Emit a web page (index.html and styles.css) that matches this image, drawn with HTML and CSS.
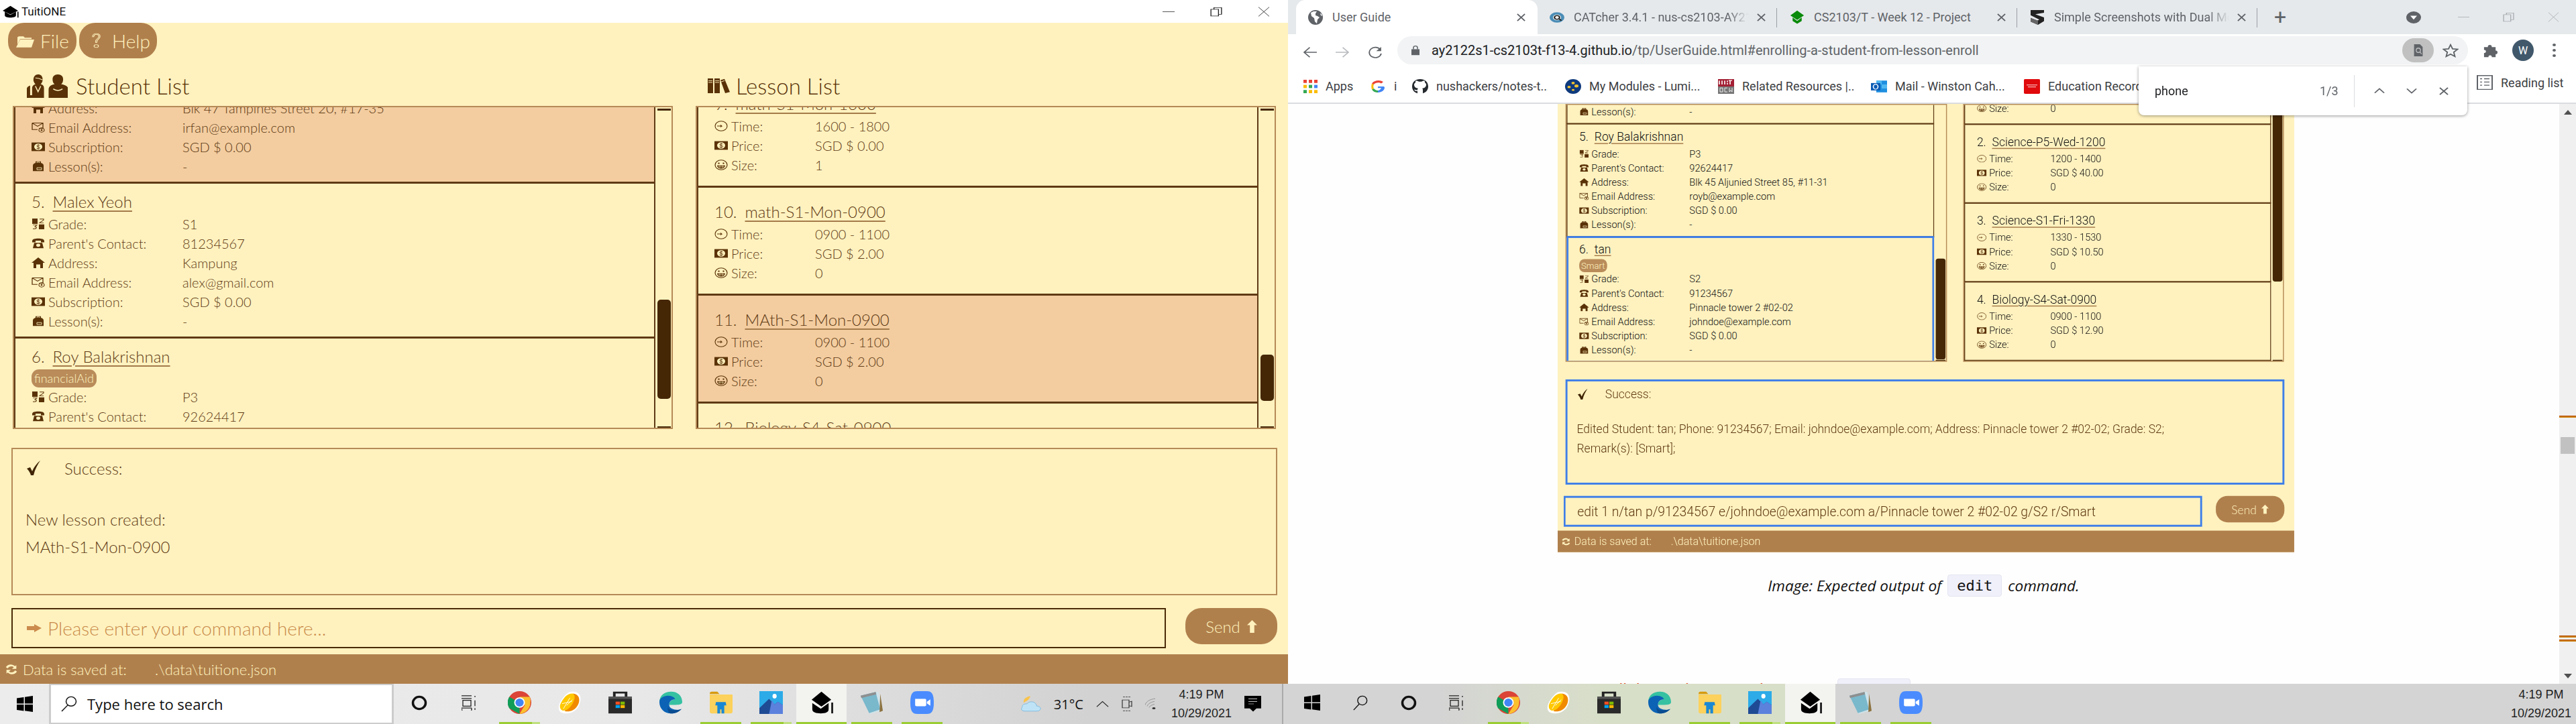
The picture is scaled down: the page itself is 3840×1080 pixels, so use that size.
FILE: index.html
```html
<!DOCTYPE html>
<html lang="en">
<head>
<meta charset="utf-8">
<title>TuitiONE and User Guide</title>
<link rel="stylesheet" href="styles.css">
</head>
<body>
<svg class="defs" width="0" height="0" aria-hidden="true">
  <symbol id="i-logo" preserveAspectRatio="none" viewBox="0 0 24 24"><path d="M12 1 23 10 12 17 1 10Z" fill="#000"/><path d="M4 12v7c0 3 4 4 8 4s8-1 8-4v-7l-8 6Z" fill="#000"/><path d="M22 12h1.600v11h-1.600z" fill="#000"/></symbol>
  <symbol id="i-folder" preserveAspectRatio="none" viewBox="0 0 28 32"><path d="M5 6h7l2 3h10v3H7L3 24V8Z" fill="#fff2bf"/><path d="M7 13h21l-4 17H1Z" fill="#fff2bf"/></symbol>
  <symbol id="i-help" preserveAspectRatio="none" viewBox="0 0 18 40"><path d="M3 10C3 4 6 2 9 2s6 2 6 7c0 6-5 7-5 13v2H8v-3c0-6 5-7 5-12 0-4-2-5-4-5S5 6 5 10Z" fill="none" stroke="#fff2bf" stroke-width="1.200"/><circle cx="9" cy="33" r="3.500" fill="none" stroke="#fff2bf" stroke-width="1.200"/></symbol>
  <symbol id="i-students" preserveAspectRatio="none" viewBox="0 0 62 34"><g fill="#5a3208"><path d="M8 30V20c0-4 3-5 5-6-2-2-3-4-3-6 0-5 3-8 7-8s7 2 7 8c0 2-1 4-3 6 3 1 5 2 5 6v14H0V21c0-3 3-4 5-5v14Z"/><path d="M52 14c2-1 3-4 3-7 0-4-3-7-8-7s-8 3-8 7c0 3 1 6 3 7-5 1-9 3-9 8v12h30V22c0-5-5-7-11-8Z"/></g><path d="M13 5c4 0 7 1 11 3" stroke="#fff2bf" stroke-width="1" fill="none"/><path d="M13 17l4 8 4-8" stroke="#fff2bf" stroke-width="1.500" fill="none"/><path d="M40 21c4 3 10 3 14 0" stroke="#fff2bf" stroke-width="1.500" fill="none"/></symbol>
  <symbol id="i-books" preserveAspectRatio="none" viewBox="0 0 33 26"><g fill="#5a3208"><path d="M0 0h8v26H0zM10 0h8v26h-8zM19 3l6-2 8 23-7 2z"/></g><path d="M1 4h6M1 7h6M11 4h6M11 7h6M20 6l5-2" stroke="#fff2bf" stroke-width="1"/></symbol>
  <symbol id="i-grade" preserveAspectRatio="none" viewBox="0 0 20 20"><path d="M1 0h8v10H1zM11 11h8v9h-8z" fill="#5a3208"/><path d="M12 1h6v2l-6 5h6M2 12h6l-3 3c3 0 3 4 0 4H2" fill="none" stroke="#5a3208" stroke-width="1.100"/></symbol>
  <symbol id="i-phone" preserveAspectRatio="none" viewBox="0 0 20 20"><path d="M1 6C1 2 5 1 10 1s9 1 9 5v2h-5V5H6v3H1ZM4 9h12l2 10H2Z" fill="#5a3208"/><circle cx="10" cy="13.500" r="3" fill="#fff2bf"/></symbol>
  <symbol id="i-home" preserveAspectRatio="none" viewBox="0 0 20 20"><path d="M10 0 20 10h-3v10h-4v-7H7v7H3V10H0Z" fill="#5a3208"/></symbol>
  <symbol id="i-mail" preserveAspectRatio="none" viewBox="0 0 20 20"><path d="M1 2h16v10H11M1 2v12h8M1 2l8 6 8-6" fill="none" stroke="#5a3208" stroke-width="1.300"/><circle cx="15" cy="15" r="4" fill="none" stroke="#5a3208" stroke-width="1.200"/><circle cx="15" cy="15" r="1.500" fill="#5a3208"/></symbol>
  <symbol id="i-money" preserveAspectRatio="none" viewBox="0 0 20 20"><path d="M0 2h20v16H0z" fill="#5a3208"/><circle cx="10" cy="10" r="6" fill="#fff2bf"/><path d="M12.500 7.500C11 6 7.500 7 8 9c.5 1.500 4.500 .5 4.500 3 0 2-3.500 2-5 .5M10 5v10" fill="none" stroke="#5a3208" stroke-width="1"/></symbol>
  <symbol id="i-bag" preserveAspectRatio="none" viewBox="0 0 20 22"><path d="M6 4V1h8v3c3 1 4 3 4 6v11H2V10c0-3 1-5 4-6Z" fill="#5a3208"/><path d="M8 4V2.500h4V4M8 14h7v4H8Z" fill="none" stroke="#fff2bf" stroke-width="1"/></symbol>
  <symbol id="i-clock" preserveAspectRatio="none" viewBox="0 0 20 20"><circle cx="10" cy="10" r="9" fill="none" stroke="#5a3208" stroke-width="1.100"/><path d="M4 10h7l-2-2M11 10l-2 2" fill="none" stroke="#5a3208" stroke-width="1.100"/></symbol>
  <symbol id="i-grin" preserveAspectRatio="none" viewBox="0 0 20 20"><circle cx="10" cy="10" r="9" fill="none" stroke="#5a3208" stroke-width="1.200"/><circle cx="6.500" cy="7" r="1.300" fill="#5a3208"/><circle cx="13.500" cy="7" r="1.300" fill="#5a3208"/><path d="M4 11h12c0 4-3 6-6 6s-6-2-6-6Z" fill="#5a3208"/><path d="M5 13.500h10M8 11v5M12 11v5" stroke="#fff2bf" stroke-width=".7"/></symbol>
  <symbol id="i-check" preserveAspectRatio="none" viewBox="0 0 24 24"><path d="M2 13 7 11l3 6C13 10 17 5 22 1c-4 6-8 13-10 22H8C7 19 5 16 2 13Z" fill="#3f2405"/></symbol>
  <symbol id="i-right" preserveAspectRatio="none" viewBox="0 0 24 20"><path d="M0 5h12V0l12 10-12 10v-5H0Z" fill="#cb8b4c"/></symbol>
  <symbol id="i-up" preserveAspectRatio="none" viewBox="0 0 16 20"><path d="M8 0 16 8h-4.500v12h-7V8H0Z" fill="#fff2bf"/></symbol>
  <symbol id="i-sync" preserveAspectRatio="none" viewBox="0 0 24 24"><path d="M20 4v7h-7l3-3c-3-3-8-2-10 2l-3-2C6 2 13 1 18 6ZM4 20v-7h7l-3 3c3 3 8 2 10-2l3 2c-3 6-10 7-15 2Z" fill="#fff2bf"/></symbol>
  <symbol id="i-win" preserveAspectRatio="none" viewBox="0 0 24 24"><path d="M0 3.500 10.500 2v9.500H0ZM12 1.800 24 0v11.500H12ZM0 13h10.500v9.500L0 21ZM12 13h12v11l-12-1.800Z" fill="#000"/></symbol>
  <symbol id="i-search" preserveAspectRatio="none" viewBox="0 0 26 26"><circle cx="16" cy="9" r="7.500" fill="none" stroke="#111" stroke-width="1.500"/><path d="M11 15 2 25" stroke="#111" stroke-width="1.500"/></symbol>
  <symbol id="i-cortana" preserveAspectRatio="none" viewBox="0 0 24 24"><circle cx="12" cy="12" r="9.500" fill="none" stroke="#111" stroke-width="3.500"/></symbol>
  <symbol id="i-taskview" preserveAspectRatio="none" viewBox="0 0 24 24"><path d="M0 1h15M0 5h15M2 8h12v9H2ZM0 20h15M0 23h1.500M14 23h1.500M20 1v2M20 8v9M20 20v3M0 20v3M15 20v3" fill="none" stroke="#222" stroke-width="1.300"/></symbol>
  <symbol id="i-chrome" preserveAspectRatio="none" viewBox="0 0 48 48"><circle cx="24" cy="24" r="24" fill="#db4437"/><path d="M3 12A24 24 0 0 0 3 36l21 12 0-24Z" fill="#0f9d58"/><path d="M24 12h21a24 24 0 0 1 1 12 24 24 0 0 1-22 24l11-19Z" fill="#fbc02d"/><circle cx="24" cy="24" r="11" fill="#fff"/><circle cx="24" cy="24" r="8.500" fill="#4285f4"/></symbol>
  <symbol id="i-orange" preserveAspectRatio="none" viewBox="0 0 36 40"><path d="M24 1C34 2 37 12 32 25S14 41 6 38C-1 35-1 25 6 14S17 0 24 1Z" fill="#fff"/><path d="M23 4c9 1 12 11 7 21s-14 12-20 10L18 22Z" fill="#f08a00"/><path d="M22 4C14 4 9 11 5 19s-2 13 2 15c5 1 11-4 15-12s5-16 0-18Z" fill="#ffc800"/><path d="M8 31 18 12M13 25l9-10M6 22l15-4" stroke="#fff" stroke-width="1"/></symbol>
  <symbol id="i-store" preserveAspectRatio="none" viewBox="0 0 36 50"><path d="M9 12V3h18v9" fill="none" stroke="#222" stroke-width="4"/><path d="M0 12h36v37H0Z" fill="#2a2a2a"/><path d="M0 12h36v5H0Z" fill="#555"/><path d="M11 23h6.500v6.500H11Z" fill="#f25022"/><path d="M18.500 23H25v6.500h-6.500Z" fill="#7fba00"/><path d="M11 30.500h6.500V37H11Z" fill="#00a4ef"/><path d="M18.500 30.500H25V37h-6.500Z" fill="#ffb900"/></symbol>
  <symbol id="i-edge" preserveAspectRatio="none" viewBox="0 0 36 50"><path d="M1 24C1 9 9 1 19 1c10 0 17 9 17 23 0 5-4 6-10 6H16c0-8 5-12 9-12-3-7-22-6-24 6Z" fill="#35c1a2"/><path d="M1 24c0-9 7-14 13-14 7 0 11 5 11 8-5 0-9 4-9 12 0 7 6 11 14 11 2 0 4-1 5-2-4 6-9 10-16 10C8 49 1 38 1 24Z" fill="#0c63b5"/><path d="M14 33c0 8 8 12 21 6-4 6-9 10-16 10-4 0-6-8-5-16Z" fill="#0a4c90"/></symbol>
  <symbol id="i-explorer" preserveAspectRatio="none" viewBox="0 0 34 40"><path d="M1 4c0-2 1-3 3-3h8l3 4H1Z" fill="#d89b0e"/><path d="M1 6h33v30c0 2-1 3-3 3H4c-2 0-3-1-3-3Z" fill="#fcd15c"/><path d="M9 25l1-6h14l1 6h-3v14h-4v-7h-2v7h-4V25Z" fill="#1b88d4"/></symbol>
  <symbol id="i-photos" preserveAspectRatio="none" viewBox="0 0 34 50"><path d="M0 0h34v50H0Z" fill="#2cabe8"/><path d="M34 50H0V37L14 17l8 12 5-6 7 8Z" fill="#1f4b94"/><path d="M34 50H14L18 20l4 9 5-6 7 8Z" fill="#5b81dd"/><ellipse cx="22" cy="11" rx="3" ry="5" fill="#fff"/></symbol>
  <symbol id="i-cap" preserveAspectRatio="none" viewBox="0 0 36 40"><path d="M18 1 33 15 18 27 3 15Z" fill="#000"/><path d="M4 21v11c0 5 6 7 13 7s12-2 12-7V21L17 31Z" fill="#000"/><path d="M33 20h3v19h-3z" fill="#222"/></symbol>
  <symbol id="i-notepad" preserveAspectRatio="none" viewBox="0 0 36 50"><path d="M4 9 28 1l7 41-20 8Z" fill="#cfe3ea"/><path d="M1 10 24 2l7 38-17 8Z" fill="#7ab8cc"/><path d="M1 10 24 2l1 5L2 15Z" fill="#8f8f8f"/><path d="M31 6l4 37-5 3Z" fill="#8c7240"/></symbol>
  <symbol id="i-zoom" preserveAspectRatio="none" viewBox="0 0 34 50"><path d="M10 0h14c7 0 10 6 10 25s-3 25-10 25H10C3 50 0 44 0 25S3 0 10 0Z" fill="#4a8cff"/><path d="M7 17h14c1 0 2 1 2 2v12c0 1-1 2-2 2H9c-1 0-2-1-2-2ZM24 23l5-5v14l-5-5Z" fill="#fff"/></symbol>
  <symbol id="i-weather" preserveAspectRatio="none" viewBox="0 0 30 40"><path d="M14 1C8 2 3 8 4 17l6-6c2-3 3-6 4-10Z" fill="#f9c34a"/><path d="M6 38C1 38-1 33 2 28c-1-5 3-9 7-8 2-6 9-7 12-2 2 3 2 5 2 7 4 1 7 4 6 8s-3 5-6 5Z" fill="#bfe3f6" stroke="#71b5df" stroke-width="1"/></symbol>
  <symbol id="i-caret" preserveAspectRatio="none" viewBox="0 0 20 20"><path d="M1 17 10 4l9 13" fill="none" stroke="#222" stroke-width="1.400"/></symbol>
  <symbol id="i-webcam" preserveAspectRatio="none" viewBox="0 0 16 34"><path d="M2 1h12M2 33h12" stroke="#333" stroke-dasharray="3 1"/><path d="M1 8h10v18H1ZM11 13l4-2v12l-4-2Z" fill="none" stroke="#333" stroke-width="1.200"/></symbol>
  <symbol id="i-wifi" preserveAspectRatio="none" viewBox="0 0 20 30"><g fill="none" stroke="#888" stroke-width="1"><path d="M0 18C1 9 8 3 15 2M3 21c1-6 6-11 11-12M6 24c1-4 4-7 8-8"/></g><circle cx="13" cy="26" r="2.500" fill="#333"/></symbol>
  <symbol id="i-notif" preserveAspectRatio="none" viewBox="0 0 25 46"><path d="M0 0h25v36h-7l-5 9-5-9H0Z" fill="#000"/><path d="M6 9h13M6 16h13M6 23h8" stroke="#fff" stroke-width="1.400"/></symbol>
  <symbol id="i-globe" preserveAspectRatio="none" viewBox="0 0 22 22"><circle cx="11" cy="11" r="11" fill="#5f6368"/><path d="M8 2 4 4l1 5 4 3 1 5 3 3 1-6 3-3-3-2-3-1V5l2-3ZM18 5l1 3 2 1-1-3Z" fill="#fff"/></symbol>
  <symbol id="i-catcher" preserveAspectRatio="none" viewBox="0 0 20 28"><circle cx="10" cy="14" r="10" fill="#4b8db6"/><circle cx="10" cy="14" r="5.500" fill="#fff"/><circle cx="10" cy="14" r="3.500" fill="none" stroke="#222" stroke-width="2"/><path d="M13 17l3 3" stroke="#222" stroke-width="2"/></symbol>
  <symbol id="i-nus" preserveAspectRatio="none" viewBox="0 0 26 30"><path d="M13 1 25 11 13 20 1 11Z" fill="#0a8a0a"/><path d="M5 15v7l8 6 8-6v-7l-8 7Z" fill="#0a8a0a"/></symbol>
  <symbol id="i-simple" preserveAspectRatio="none" viewBox="0 0 22 28"><path d="M1 0 21 0v5L8 8l13 6v7l-9 7-11-6v-7l10 5 3-2L1 10Z" fill="#222"/><path d="M1 22l11 6v-8L1 15Z" fill="#666"/></symbol>
  <symbol id="i-x" preserveAspectRatio="none" viewBox="0 0 14 14"><path d="M1 1 13 13M13 1 1 13" stroke="#5f6368" stroke-width="2" fill="none"/></symbol>
  <symbol id="i-back" preserveAspectRatio="none" viewBox="0 0 20 20"><path d="M19 10H2M9 2l-8 8 8 8" fill="none" stroke="currentColor" stroke-width="1.800"/></symbol>
  <symbol id="i-fwd" preserveAspectRatio="none" viewBox="0 0 20 20"><path d="M1 10h17M11 2l8 8-8 8" fill="none" stroke="currentColor" stroke-width="1.800"/></symbol>
  <symbol id="i-reload" preserveAspectRatio="none" viewBox="0 0 20 20"><path d="M17 6a8.500 8.500 0 1 0 1 6" fill="none" stroke="#5f6368" stroke-width="1.800"/><path d="M18 1v7h-7Z" fill="#5f6368"/></symbol>
  <symbol id="i-lock" preserveAspectRatio="none" viewBox="0 0 12 20"><path d="M0 8h12v11H0Z" fill="#5f6368"/><path d="M3 8V5c0-4 6-4 6 0v3" fill="none" stroke="#5f6368" stroke-width="1.500"/></symbol>
  <symbol id="i-lens" preserveAspectRatio="none" viewBox="0 0 20 22"><path d="M2 0h11l5 5v17H2Z" fill="#5f6368"/><circle cx="10" cy="11" r="4" fill="none" stroke="#c0c0c0" stroke-width="1.600"/><path d="M13 14l3 4" stroke="#c0c0c0" stroke-width="1.600"/></symbol>
  <symbol id="i-star" preserveAspectRatio="none" viewBox="0 0 24 24"><path d="M12 2 15 9l7.500 .7-5.700 5 1.700 7.300L12 18l-6.500 4 1.700-7.300-5.700-5L9 9Z" fill="none" stroke="#5f6368" stroke-width="1.900"/></symbol>
  <symbol id="i-puzzle" preserveAspectRatio="none" viewBox="0 0 24 24"><path d="M2 6h6c-1-5 7-5 6 0h6v6c4-1 4 7 0 6v5H14c1-4-6-4-5 0H2v-7c4 1 4-6 0-5Z" fill="#5f6368"/></symbol>
  <symbol id="i-apps" preserveAspectRatio="none" viewBox="0 0 21 21"><path d="M0 0h5v5H0z" fill="#ea4335"/><path d="M8 0h5v5H8z" fill="#ea4335"/><path d="M16 0h5v5h-5z" fill="#ea4335"/><path d="M0 8h5v5H0z" fill="#fbbc05"/><path d="M8 8h5v5H8z" fill="#34a853"/><path d="M16 8h5v5h-5z" fill="#4285f4"/><path d="M0 16h5v5H0z" fill="#34a853"/><path d="M8 16h5v5H8z" fill="#fbbc05"/><path d="M16 16h5v5h-5z" fill="#fbbc05"/></symbol>
  <symbol id="i-g" preserveAspectRatio="none" viewBox="0 0 20 24"><path d="M19 12H10v3h5c-1 3-3 5-5 5V24c6 0 10-5 10-10Z" fill="#4285f4"/><path d="M10 24c-4 0-7-2-9-6l3-2c1 2 3 4 6 4Z" fill="#34a853"/><path d="M1 18c-1-4-1-8 0-12l3 2c-1 3-1 5 0 8Z" fill="#fbbc05"/><path d="M1 6c3-6 12-8 17-3l-3 3c-3-3-9-2-11 2Z" fill="#ea4335"/></symbol>
  <symbol id="i-github" preserveAspectRatio="none" viewBox="0 0 24 30"><path d="M12 0C5 0 0 6 0 15c0 7 3 12 8 14v-5c-3 1-4-1-5-3 2 0 3 2 5 1 0-1 0-2 1-3-4-1-6-3-6-8 0-2 1-3 2-4 0-2 0-3 1-4 1 0 3 1 4 2h4c1-1 3-2 4-2 1 1 1 2 1 4 1 1 2 2 2 4 0 5-2 7-6 8 1 1 1 2 1 3v7c5-2 8-7 8-14C24 6 19 0 12 0Z" fill="#24292e"/></symbol>
  <symbol id="i-lumi" preserveAspectRatio="none" viewBox="0 0 24 30"><ellipse cx="12" cy="15" rx="12" ry="15" fill="#0f3a7d"/><circle cx="12" cy="8" r="2.500" fill="#f4c430"/><circle cx="6" cy="16" r="2.500" fill="#f4c430"/><circle cx="17" cy="14" r="3" fill="#f4c430"/><circle cx="12" cy="22" r="2" fill="#f4c430"/></symbol>
  <symbol id="i-mit" preserveAspectRatio="none" viewBox="0 0 24 30"><path d="M0 0h24v15H0Z" fill="#a31f34"/><path d="M2 3v8M6 3v8M10 3v8M14 3v3M18 3v8M14 8v3M21 3h-5" stroke="#fff" stroke-width="1.600"/><path d="M0 15h24v15H0Z" fill="#777"/><path d="M3 18h4v8H3ZM10 18h4M10 26h4M10 18v8M17 18v8l2-3 2 3v-8" stroke="#fff" fill="none"/></symbol>
  <symbol id="i-outlook" preserveAspectRatio="none" viewBox="0 0 24 30"><path d="M8 3h16v24H8Z" fill="#1f8fe0"/><path d="M8 3h8v8H8ZM16 11h8v8h-8Z" fill="#50b7f0"/><path d="M0 8h14v15H0Z" fill="#0a5bb5"/><ellipse cx="7" cy="15.500" rx="3.500" ry="5" fill="none" stroke="#fff" stroke-width="1.600"/></symbol>
  <symbol id="i-oracle" preserveAspectRatio="none" viewBox="0 0 24 30"><rect width="24" height="30" rx="2" fill="#e0090c"/><path d="M4 12h16M6 16h12" stroke="#fff" stroke-width="1"/></symbol>
  <symbol id="i-reading" preserveAspectRatio="none" viewBox="0 0 24 32"><path d="M1 1h22v30H1Z" fill="none" stroke="#5f6368" stroke-width="2"/><path d="M5 8h3M5 15h3M5 22h3M11 8h8M11 15h8M11 22h8" stroke="#5f6368" stroke-width="2"/></symbol>
  <symbol id="i-chev-up" preserveAspectRatio="none" viewBox="0 0 16 14"><path d="M1 12 8 2l7 10" fill="none" stroke="#5f6368" stroke-width="2"/></symbol>
  <symbol id="i-chev-down" preserveAspectRatio="none" viewBox="0 0 16 14"><path d="M1 2l7 10 7-10" fill="none" stroke="#5f6368" stroke-width="2"/></symbol>
  <symbol id="i-drop" preserveAspectRatio="none" viewBox="0 0 22 22"><circle cx="11" cy="11" r="11" fill="#5f6368"/><path d="M6 8h10l-5 7Z" fill="#fff"/></symbol>
  <symbol id="i-restore" preserveAspectRatio="none" viewBox="0 0 16 24"><path d="M1 6h10v16H1ZM5 6V2h10v16h-4" fill="none" stroke="currentColor" stroke-width="1.200"/></symbol>
  <symbol id="i-close" preserveAspectRatio="none" viewBox="0 0 18 24"><path d="M1 1 17 23M17 1 1 23" fill="none" stroke="currentColor" stroke-width="1"/></symbol>
  <symbol id="i-min" preserveAspectRatio="none" viewBox="0 0 18 24"><path d="M0 12h18" stroke="currentColor" stroke-width="1.200"/></symbol>
</svg>

<main class="desktop">
  <section class="win-app">
    <header class="titlebar">
      <svg class="logo"><use href="#i-logo"/></svg>
      <span class="title-text">TuitiONE</span>
      <div class="win-ctrls">
        <svg class="wc"><use href="#i-min"/></svg>
        <svg class="wc"><use href="#i-restore"/></svg>
        <svg class="wc"><use href="#i-close"/></svg>
      </div>
    </header>
    <nav class="menu">
      <button class="menu-btn file"><svg class="menu-ic"><use href="#i-folder"/></svg>File</button>
      <button class="menu-btn help"><svg class="menu-ic-q"><use href="#i-help"/></svg>Help</button>
    </nav>
    <div class="tui-lists">
      <div class="col col-students">
        <h2 class="col-title"><svg class="title-ic-students"><use href="#i-students"/></svg>Student List</h2>
        <div class="list-panel">
          <div class="list-scroll">
            <div class="list-inner shift-a">
              <article class="card selected">
                <div class="field"><svg class="fi"><use href="#i-home"/></svg><span class="lab">Address:</span><span class="val">Blk 47 Tampines Street 20, #17-35</span></div>
                <div class="field"><svg class="fi"><use href="#i-mail"/></svg><span class="lab">Email Address:</span><span class="val">irfan@example.com</span></div>
                <div class="field"><svg class="fi"><use href="#i-money"/></svg><span class="lab">Subscription:</span><span class="val">SGD $ 0.00</span></div>
                <div class="field"><svg class="fi"><use href="#i-bag"/></svg><span class="lab">Lesson(s):</span><span class="val">-</span></div>
              </article>
              <article class="card">
                <div class="name-row"><span class="num">5.</span><span class="name">Malex Yeoh</span></div>
                <div class="field"><svg class="fi"><use href="#i-grade"/></svg><span class="lab">Grade:</span><span class="val">S1</span></div>
                <div class="field"><svg class="fi"><use href="#i-phone"/></svg><span class="lab">Parent's Contact:</span><span class="val">81234567</span></div>
                <div class="field"><svg class="fi"><use href="#i-home"/></svg><span class="lab">Address:</span><span class="val">Kampung</span></div>
                <div class="field"><svg class="fi"><use href="#i-mail"/></svg><span class="lab">Email Address:</span><span class="val">alex@gmail.com</span></div>
                <div class="field"><svg class="fi"><use href="#i-money"/></svg><span class="lab">Subscription:</span><span class="val">SGD $ 0.00</span></div>
                <div class="field"><svg class="fi"><use href="#i-bag"/></svg><span class="lab">Lesson(s):</span><span class="val">-</span></div>
              </article>
              <article class="card">
                <div class="name-row"><span class="num">6.</span><span class="name">Roy Balakrishnan</span></div>
                <div class="tags"><span class="tag">financialAid</span></div>
                <div class="field"><svg class="fi"><use href="#i-grade"/></svg><span class="lab">Grade:</span><span class="val">P3</span></div>
                <div class="field"><svg class="fi"><use href="#i-phone"/></svg><span class="lab">Parent's Contact:</span><span class="val">92624417</span></div>
              </article>
            </div>
          </div>
          <div class="scrollbar"><i class="sb-end"></i><i class="thumb thumb-a"></i><i class="sb-end bottom"></i></div>
        </div>
      </div>
      <div class="col col-lessons">
        <h2 class="col-title lesson"><svg class="title-ic-books"><use href="#i-books"/></svg>Lesson List</h2>
        <div class="list-panel">
          <div class="list-scroll">
            <div class="list-inner shift-b">
              <article class="card lesson-card">
                <div class="name-row"><span class="num">9.</span><span class="name">math-S1-Mon-1600</span></div>
                <div class="field"><svg class="fi"><use href="#i-clock"/></svg><span class="lab">Time:</span><span class="val">1600 - 1800</span></div>
                <div class="field"><svg class="fi"><use href="#i-money"/></svg><span class="lab">Price:</span><span class="val">SGD $ 0.00</span></div>
                <div class="field"><svg class="fi"><use href="#i-grin"/></svg><span class="lab">Size:</span><span class="val">1</span></div>
              </article>
              <article class="card lesson-card">
                <div class="name-row"><span class="num">10.</span><span class="name">math-S1-Mon-0900</span></div>
                <div class="field"><svg class="fi"><use href="#i-clock"/></svg><span class="lab">Time:</span><span class="val">0900 - 1100</span></div>
                <div class="field"><svg class="fi"><use href="#i-money"/></svg><span class="lab">Price:</span><span class="val">SGD $ 2.00</span></div>
                <div class="field"><svg class="fi"><use href="#i-grin"/></svg><span class="lab">Size:</span><span class="val">0</span></div>
              </article>
              <article class="card lesson-card selected">
                <div class="name-row"><span class="num">11.</span><span class="name">MAth-S1-Mon-0900</span></div>
                <div class="field"><svg class="fi"><use href="#i-clock"/></svg><span class="lab">Time:</span><span class="val">0900 - 1100</span></div>
                <div class="field"><svg class="fi"><use href="#i-money"/></svg><span class="lab">Price:</span><span class="val">SGD $ 2.00</span></div>
                <div class="field"><svg class="fi"><use href="#i-grin"/></svg><span class="lab">Size:</span><span class="val">0</span></div>
              </article>
              <article class="card lesson-card">
                <div class="name-row"><span class="num">12.</span><span class="name">Biology-S4-Sat-0900</span></div>
              </article>
            </div>
          </div>
          <div class="scrollbar"><i class="sb-end"></i><i class="thumb thumb-b"></i><i class="sb-end bottom"></i></div>
        </div>
      </div>
    </div>
    <div class="result">
      <div class="result-head"><svg class="check"><use href="#i-check"/></svg><span>Success:</span></div>
      <p class="result-body">New lesson created:<br>MAth-S1-Mon-0900</p>
    </div>
    <div class="command">
      <div class="cmd-input placeholder"><svg class="cmd-arrow"><use href="#i-right"/></svg>Please enter your command here...</div>
      <button class="send">Send<svg class="send-ic"><use href="#i-up"/></svg></button>
    </div>
    <footer class="status"><svg class="sync"><use href="#i-sync"/></svg><span class="status-a">Data is saved at:</span><span>.\data\tuitione.json</span></footer>
  </section>

  <section class="win-browser">
    <div class="tabstrip">
      <div class="tab active"><svg class="fav"><use href="#i-globe"/></svg><span class="tab-title">User Guide</span><svg class="tab-x"><use href="#i-x"/></svg></div>
      <div class="tab sep"><svg class="fav"><use href="#i-catcher"/></svg><span class="tab-title fade">CATcher 3.4.1 - nus-cs2103-AY2122S1</span><svg class="tab-x"><use href="#i-x"/></svg></div>
      <div class="tab sep"><svg class="fav"><use href="#i-nus"/></svg><span class="tab-title">CS2103/T - Week 12 - Project</span><svg class="tab-x"><use href="#i-x"/></svg></div>
      <div class="tab sep"><svg class="fav"><use href="#i-simple"/></svg><span class="tab-title fade">Simple Screenshots with Dual Monitors</span><svg class="tab-x"><use href="#i-x"/></svg></div>
      <div class="newtab">+</div>
      <div class="strip-right">
        <svg class="drop"><use href="#i-drop"/></svg>
        <svg class="bw"><use href="#i-min"/></svg>
        <svg class="bw"><use href="#i-restore"/></svg>
        <svg class="bw"><use href="#i-close"/></svg>
      </div>
    </div>
    <div class="toolbar">
      <svg class="nav-ic back"><use href="#i-back"/></svg>
      <svg class="nav-ic fwd"><use href="#i-fwd"/></svg>
      <svg class="nav-ic reload"><use href="#i-reload"/></svg>
      <div class="omnibox">
        <svg class="lock"><use href="#i-lock"/></svg>
        <span class="url"><b class="host">ay2122s1-cs2103t-f13-4.github.io</b>/tp/UserGuide.html#enrolling-a-student-from-lesson-enroll</span>
        <span class="lens"><svg class="lens-ic"><use href="#i-lens"/></svg></span>
        <svg class="star"><use href="#i-star"/></svg>
      </div>
      <svg class="puzzle"><use href="#i-puzzle"/></svg>
      <span class="avatar">W</span>
      <span class="kebab"><i></i><i></i><i></i></span>
    </div>
    <div class="bookmarks">
      <span class="bm first"><svg class="bm-ic"><use href="#i-apps"/></svg>Apps</span>
      <span class="bm google"><svg class="bm-ic"><use href="#i-g"/></svg>i</span>
      <span class="bm long"><svg class="bm-ic"><use href="#i-github"/></svg>nushackers/notes-t...</span>
      <span class="bm long"><svg class="bm-ic"><use href="#i-lumi"/></svg>My Modules - Lumi...</span>
      <span class="bm long"><svg class="bm-ic"><use href="#i-mit"/></svg>Related Resources |...</span>
      <span class="bm long"><svg class="bm-ic"><use href="#i-outlook"/></svg>Mail - Winston Cah...</span>
      <span class="bm"><svg class="bm-ic"><use href="#i-oracle"/></svg>Education Records</span>
      <span class="bm reading"><svg class="bm-ic"><use href="#i-reading"/></svg>Reading list</span>
    </div>
    <div class="findbar">
      <span class="find-q">phone</span><span class="find-n">1/3</span><i class="find-div"></i>
      <svg class="find-ic"><use href="#i-chev-up"/></svg><svg class="find-ic"><use href="#i-chev-down"/></svg><svg class="find-x"><use href="#i-x"/></svg>
    </div>
    <div class="viewport">
      <div class="doc">
        <div class="shot">
          <div class="mini">
            <div class="mini-lists">
              <div class="list-panel mini-students">
                <div class="list-scroll">
                  <div class="list-inner shift-c">
                    <article class="card">
                      <div class="field"><svg class="fi"><use href="#i-bag"/></svg><span class="lab">Lesson(s):</span><span class="val">-</span></div>
                    </article>
                    <article class="card">
                      <div class="name-row"><span class="num">5.</span><span class="name">Roy Balakrishnan</span></div>
                      <div class="field"><svg class="fi"><use href="#i-grade"/></svg><span class="lab">Grade:</span><span class="val">P3</span></div>
                      <div class="field"><svg class="fi"><use href="#i-phone"/></svg><span class="lab">Parent's Contact:</span><span class="val">92624417</span></div>
                      <div class="field"><svg class="fi"><use href="#i-home"/></svg><span class="lab">Address:</span><span class="val">Blk 45 Aljunied Street 85, #11-31</span></div>
                      <div class="field"><svg class="fi"><use href="#i-mail"/></svg><span class="lab">Email Address:</span><span class="val">royb@example.com</span></div>
                      <div class="field"><svg class="fi"><use href="#i-money"/></svg><span class="lab">Subscription:</span><span class="val">SGD $ 0.00</span></div>
                      <div class="field"><svg class="fi"><use href="#i-bag"/></svg><span class="lab">Lesson(s):</span><span class="val">-</span></div>
                    </article>
                    <article class="card focus">
                      <div class="name-row"><span class="num">6.</span><span class="name">tan</span></div>
                      <div class="tags"><span class="tag">Smart</span></div>
                      <div class="field"><svg class="fi"><use href="#i-grade"/></svg><span class="lab">Grade:</span><span class="val">S2</span></div>
                      <div class="field"><svg class="fi"><use href="#i-phone"/></svg><span class="lab">Parent's Contact:</span><span class="val">91234567</span></div>
                      <div class="field"><svg class="fi"><use href="#i-home"/></svg><span class="lab">Address:</span><span class="val">Pinnacle tower 2 #02-02</span></div>
                      <div class="field"><svg class="fi"><use href="#i-mail"/></svg><span class="lab">Email Address:</span><span class="val">johndoe@example.com</span></div>
                      <div class="field"><svg class="fi"><use href="#i-money"/></svg><span class="lab">Subscription:</span><span class="val">SGD $ 0.00</span></div>
                      <div class="field"><svg class="fi"><use href="#i-bag"/></svg><span class="lab">Lesson(s):</span><span class="val">-</span></div>
                    </article>
                  </div>
                </div>
                <div class="scrollbar"><i class="thumb thumb-c"></i><i class="sb-end bottom"></i></div>
              </div>
              <div class="list-panel mini-lessons">
                <div class="list-scroll">
                  <div class="list-inner shift-d">
                    <article class="card lesson-card">
                      <div class="field"><svg class="fi"><use href="#i-grin"/></svg><span class="lab">Size:</span><span class="val">0</span></div>
                    </article>
                    <article class="card lesson-card">
                      <div class="name-row"><span class="num">2.</span><span class="name">Science-P5-Wed-1200</span></div>
                      <div class="field"><svg class="fi"><use href="#i-clock"/></svg><span class="lab">Time:</span><span class="val">1200 - 1400</span></div>
                      <div class="field"><svg class="fi"><use href="#i-money"/></svg><span class="lab">Price:</span><span class="val">SGD $ 40.00</span></div>
                      <div class="field"><svg class="fi"><use href="#i-grin"/></svg><span class="lab">Size:</span><span class="val">0</span></div>
                    </article>
                    <article class="card lesson-card">
                      <div class="name-row"><span class="num">3.</span><span class="name">Science-S1-Fri-1330</span></div>
                      <div class="field"><svg class="fi"><use href="#i-clock"/></svg><span class="lab">Time:</span><span class="val">1330 - 1530</span></div>
                      <div class="field"><svg class="fi"><use href="#i-money"/></svg><span class="lab">Price:</span><span class="val">SGD $ 10.50</span></div>
                      <div class="field"><svg class="fi"><use href="#i-grin"/></svg><span class="lab">Size:</span><span class="val">0</span></div>
                    </article>
                    <article class="card lesson-card">
                      <div class="name-row"><span class="num">4.</span><span class="name">Biology-S4-Sat-0900</span></div>
                      <div class="field"><svg class="fi"><use href="#i-clock"/></svg><span class="lab">Time:</span><span class="val">0900 - 1100</span></div>
                      <div class="field"><svg class="fi"><use href="#i-money"/></svg><span class="lab">Price:</span><span class="val">SGD $ 12.90</span></div>
                      <div class="field"><svg class="fi"><use href="#i-grin"/></svg><span class="lab">Size:</span><span class="val">0</span></div>
                    </article>
                  </div>
                </div>
                <div class="scrollbar"><i class="thumb thumb-d"></i><i class="sb-end bottom"></i></div>
              </div>
            </div>
            <div class="result mini-result">
              <div class="result-head"><svg class="check"><use href="#i-check"/></svg><span>Success:</span></div>
              <p class="result-body">Edited Student: tan; Phone: 91234567; Email: johndoe@example.com; Address: Pinnacle tower 2 #02-02; Grade: S2;<br>Remark(s): [Smart];</p>
            </div>
            <div class="command mini-command">
              <div class="cmd-input focus-input">edit 1 n/tan p/91234567 e/johndoe@example.com a/Pinnacle tower 2 #02-02 g/S2 r/Smart</div>
              <button class="send">Send<svg class="send-ic"><use href="#i-up"/></svg></button>
            </div>
            <footer class="status mini-status"><svg class="sync"><use href="#i-sync"/></svg><span class="status-a">Data is saved at:</span><span>.\data\tuitione.json</span></footer>
          </div>
        </div>
        <p class="caption"><em>Image: Expected output of</em> <code class="code">edit</code> <em>command.</em></p>
        <p class="next"><span class="warn">Enroll the student into a lesson</span><code class="code next-code"></code></p>
      </div>
      <div class="page-sb">
        <i class="sb-up"></i>
        <i class="page-thumb"></i>
        <i class="mark m1"></i><i class="mark m2"></i><i class="mark m3"></i>
        <i class="sb-down"></i>
      </div>
    </div>
  </section>
</main>

<footer class="taskbars">
  <div class="taskbar left-bar">
    <span class="tb-start"><svg class="tb-win"><use href="#i-win"/></svg></span>
    <div class="search-box"><svg class="search-ic"><use href="#i-search"/></svg><span>Type here to search</span></div>
    <span class="slot"><svg class="tb-sm"><use href="#i-cortana"/></svg></span>
    <span class="slot"><svg class="tb-sm"><use href="#i-taskview"/></svg></span>
    <span class="slot run multi"><svg class="tb-ic"><use href="#i-chrome"/></svg></span>
    <span class="slot"><svg class="tb-ic"><use href="#i-orange"/></svg></span>
    <span class="slot"><svg class="tb-ic"><use href="#i-store"/></svg></span>
    <span class="slot"><svg class="tb-ic"><use href="#i-edge"/></svg></span>
    <span class="slot run"><svg class="tb-ic"><use href="#i-explorer"/></svg></span>
    <span class="slot run multi"><svg class="tb-ic"><use href="#i-photos"/></svg></span>
    <span class="slot run on"><svg class="tb-ic"><use href="#i-cap"/></svg></span>
    <span class="slot run"><svg class="tb-ic"><use href="#i-notepad"/></svg></span>
    <span class="slot run"><svg class="tb-ic"><use href="#i-zoom"/></svg></span>
    <div class="tray">
      <svg class="tray-weather"><use href="#i-weather"/></svg>
      <span class="temp">31°C</span>
      <svg class="tray-caret"><use href="#i-caret"/></svg>
      <svg class="tray-cam"><use href="#i-webcam"/></svg>
      <svg class="tray-wifi"><use href="#i-wifi"/></svg>
      <span class="clock"><span>4:19 PM</span><span>10/29/2021</span></span>
      <svg class="tray-notif"><use href="#i-notif"/></svg>
    </div>
  </div>
  <div class="taskbar right-bar">
    <span class="rslot"><svg class="tb-win"><use href="#i-win"/></svg></span>
    <span class="rslot"><svg class="tb-sm"><use href="#i-search"/></svg></span>
    <span class="rslot"><svg class="tb-sm"><use href="#i-cortana"/></svg></span>
    <span class="rslot"><svg class="tb-sm"><use href="#i-taskview"/></svg></span>
    <span class="slot run multi first-app"><svg class="tb-ic"><use href="#i-chrome"/></svg></span>
    <span class="slot"><svg class="tb-ic"><use href="#i-orange"/></svg></span>
    <span class="slot"><svg class="tb-ic"><use href="#i-store"/></svg></span>
    <span class="slot"><svg class="tb-ic"><use href="#i-edge"/></svg></span>
    <span class="slot run"><svg class="tb-ic"><use href="#i-explorer"/></svg></span>
    <span class="slot run multi"><svg class="tb-ic"><use href="#i-photos"/></svg></span>
    <span class="slot run on"><svg class="tb-ic"><use href="#i-cap"/></svg></span>
    <span class="slot run"><svg class="tb-ic"><use href="#i-notepad"/></svg></span>
    <span class="slot run"><svg class="tb-ic"><use href="#i-zoom"/></svg></span>
    <span class="clock right-clock"><span>4:19 PM</span><span>10/29/2021</span></span>
  </div>
</footer>
</body>
</html>
```
FILE: styles.css
```css
* { box-sizing: border-box; }
html, body { margin: 0; padding: 0; }
body {
  width: 3840px; height: 1080px; overflow: hidden; background: #fff;
  font-family: "Lato", "Liberation Sans", sans-serif; color: #5f3a14;
}
svg { display: block; flex: none; }
.defs { position: absolute; }
i { display: block; }
.desktop { display: flex; height: 1020px; }

/* TuitiONE window */
.win-app { width: 1920px; height: 1020px; display: flex; flex-direction: column; background: #fff2bf; flex: none; }
.titlebar { height: 34px; background: #fff; display: flex; align-items: center; color: #111; flex: none; }
.logo { width: 25px; height: 19px; margin-left: 3px; }
.title-text { font: 400 17px "Roboto", sans-serif; margin-left: 4px; }
.win-ctrls { margin-left: auto; display: flex; gap: 53px; padding-right: 27px; color: #222; }
.wc { width: 18px; height: 15px; }
.menu { height: 53px; padding-left: 12px; display: flex; gap: 4px; flex: none; }
.menu-btn { border: 0; background: #b0804c; color: #fff2bf; border-radius: 24px; font: 300 28px "Lato", sans-serif; display: flex; align-items: center; padding: 0; }
.file { width: 102px; padding-left: 11px; gap: 9px; }
.help { width: 116px; padding-left: 17px; gap: 15px; }
.menu-ic { width: 28px; height: 22px; }
.menu-ic-q { width: 17px; height: 24px; }

.tui-lists { display: flex; gap: 34px; padding-left: 19px; height: 553px; flex: none; }
.col { display: flex; flex-direction: column; }
.col-students { width: 984px; }
.col-lessons { width: 865px; }
.col-title { height: 71px; margin: 0; padding: 11px 0 0 21px; display: flex; align-items: center; gap: 12px; font: 300 33px "Lato", sans-serif; color: #5a3208; flex: none; }
.col-title.lesson { padding-left: 18px; gap: 9px; }
.title-ic-students { width: 61px; height: 35px; }
.title-ic-books { width: 33px; height: 22px; }

.list-panel { flex: 1; min-height: 0; display: flex; border: 2px solid #b58a57; background: #fff2bf; }
.list-scroll { flex: 1; min-width: 0; overflow: hidden; }
.list-inner { display: flex; flex-direction: column; }
.shift-a { margin-top: -21px; }
.shift-b { margin-top: -41px; }
.shift-c { margin-top: -8px; }
.shift-d { margin-top: -24px; }

.card { padding: 8px 0 8px 24px; border: solid #5f3a14; border-width: 0 2px 3px 2px; flex: none; }
.card.selected { background: #f3cda0; }
.lesson-card { padding-top: 17px; padding-bottom: 16px; }
.name-row { height: 38px; padding-bottom: 2px; display: flex; align-items: center; gap: 12px; font-size: 24px; font-weight: 300; }
.name { text-decoration: underline; text-decoration-thickness: 2px; text-underline-offset: 4px; text-decoration-color: #a47a4a; }
.tags { height: 27px; display: flex; }
.tag { background: #b98c5a; color: #fff2bf; border-radius: 11px; font-size: 18px; font-weight: 300; line-height: 27px; padding: 0 4px; height: 27px; }
.field { height: 29px; padding-bottom: 2px; display: flex; align-items: center; font-size: 20px; font-weight: 300; }
.fi { width: 20px; height: 16px; margin-right: 5px; }
.lab { width: 200px; flex: none; }
.lesson-card .lab { width: 125px; }

.scrollbar { width: 24px; flex: none; display: flex; flex-direction: column; padding: 2px 1px 0 3px; }
.sb-end { height: 3px; background: #452706; flex: none; }
.sb-end.bottom { margin-top: auto; height: 2px; }
.thumb { width: 100%; background: #452706; border-radius: 5px; flex: none; }
.thumb-a { height: 148px; margin-top: 282px; }
.thumb-b { height: 69px; margin-top: 364px; }
.thumb-c { height: 206px; margin-top: 312px; }
.thumb-d { height: 359px; }

.result { margin: 28px 16px 0 17px; height: 220px; border: 2px solid #b58a57; padding: 0 19px; font-size: 24px; font-weight: 300; flex: none; color: #5f3a14; }
.result-head { height: 56px; display: flex; align-items: center; gap: 34px; }
.check { width: 24px; height: 24px; }
.result-body { margin: 28px 0 0; line-height: 41px; }

.command { display: flex; margin: 19px 16px 0 17px; gap: 29px; flex: none; }
.cmd-input { flex: 1; height: 60px; border: 2px solid #4a2c08; display: flex; align-items: center; padding-left: 21px; font-size: 28px; font-weight: 300; }
.placeholder { color: #c98a4a; }
.cmd-arrow { width: 22px; height: 12px; margin-right: 9px; }
.send { width: 137px; height: 54px; border: 0; background: #b0804c; color: #fff2bf; border-radius: 24px; display: flex; align-items: center; justify-content: center; gap: 10px; font: 300 24px "Lato", sans-serif; padding: 0; flex: none; }
.send-ic { width: 15px; height: 19px; }
.status { margin-top: 9px; height: 44px; background: #b0804c; color: #fff2bf; display: flex; align-items: center; padding-left: 6px; font-size: 22px; font-weight: 300; flex: none; }
.sync { width: 22px; height: 19px; margin-right: 6px; }
.status-a { width: 197px; }

/* Browser */
.win-browser { width: 1920px; height: 1020px; position: relative; display: flex; flex-direction: column; font-family: "Roboto", sans-serif; color: #3c4043; flex: none; }
.tabstrip { height: 51px; background: #e6e9ec; display: flex; padding-left: 12px; flex: none; }
.tab { width: 358px; height: 51px; display: flex; align-items: center; padding-left: 18px; padding-right: 17px; font-size: 18px; color: #5f6368; border-right: 1px solid transparent; position: relative; }
.tab.active { width: 360px; background: #fff; border-radius: 14px 14px 0 0; }
.tab.sep::after { content: ""; position: absolute; right: 0; top: 12px; height: 29px; width: 1px; background: #9aa0a6; }
.fav { width: 22px; height: 22px; margin-right: 14px; }
.tab-title { flex: 1; white-space: nowrap; overflow: hidden; min-width: 0; }
.fade { -webkit-mask-image: linear-gradient(90deg, #000 88%, transparent); mask-image: linear-gradient(90deg, #000 88%, transparent); }
.tab-x { width: 13px; height: 12px; margin-left: 12px; }
.newtab { width: 66px; text-align: center; font-size: 32px; font-weight: 400; color: #5f6368; line-height: 50px; }
.strip-right { margin-left: auto; display: flex; align-items: center; gap: 50px; padding-right: 25px; color: #a6a9ad; }
.drop { width: 22px; height: 18px; margin-right: 5px; }
.bw { width: 17px; height: 15px; }

.toolbar { height: 53px; background: #fff; display: flex; align-items: center; color: #5f6368; flex: none; }
.nav-ic { width: 21px; height: 18px; }
.back { margin-left: 23px; }
.fwd { margin-left: 26px; color: #b8bbbf; }
.reload { margin-left: 29px; }
.omnibox { margin-left: 22px; width: 1596px; height: 42px; border-radius: 21px; background: #f1f3f4; display: flex; align-items: center; padding-left: 21px; margin-top: -5px; }
.lock { width: 12px; height: 16px; margin-right: 18px; }
.url { font-size: 20px; color: #5f6368; white-space: nowrap; }
.host { font-weight: 400; color: #202124; }
.lens { margin-left: auto; width: 47px; height: 36px; background: #c0c0c0; border-radius: 18px; display: flex; align-items: center; justify-content: center; }
.lens-ic { width: 16px; height: 18px; }
.star { width: 24px; height: 21px; margin: 0 14px 0 13px; }
.puzzle { width: 23px; height: 21px; margin-left: 22px; margin-top: -5px; }
.avatar { width: 32px; height: 32px; margin-left: 21px; margin-top: -5px; border-radius: 50%; background: #41586b; color: #fff; font-size: 16px; display: flex; align-items: center; justify-content: center; }
.kebab { margin-left: 28px; margin-top: -5px; display: flex; flex-direction: column; gap: 4px; }
.kebab i { width: 5px; height: 4px; border-radius: 50%; background: #5f6368; }

.bookmarks { height: 51px; background: #fff; border-bottom: 2px solid #dadce0; display: flex; align-items: center; gap: 26px; padding-left: 23px; font-size: 18px; color: #3c4043; flex: none; }
.bm { display: flex; align-items: center; gap: 12px; white-space: nowrap; }
.bm-ic { width: 24px; height: 22px; }
.bm.first .bm-ic { width: 21px; height: 20px; }
.bm.first { width: 75px; }
.bm.google { width: 35px; gap: 14px; }
.bm.google .bm-ic { width: 20px; height: 18px; }
.bm.long { width: 202px; overflow: hidden; }
.reading { position: absolute; left: 1772px; top: 112px; }

.findbar { position: absolute; left: 1268px; top: 99px; width: 490px; height: 73px; background: #fff; border-radius: 0 0 8px 8px; box-shadow: 0 1px 4px rgba(0,0,0,.4); display: flex; align-items: center; padding-left: 24px; font-size: 18px; z-index: 5; color: #202124; }
.find-q { width: 246px; }
.find-n { width: 51px; color: #5f6368; }
.find-div { width: 1px; height: 48px; background: #dadce0; }
.find-ic { width: 16px; height: 9px; margin-left: 29px; }
.find-ic + .find-ic { margin-left: 32px; }
.find-x { width: 14px; height: 12px; margin-left: 33px; }

.viewport { flex: 1; min-height: 0; display: flex; background: #fefefe; overflow: hidden; }
.doc { width: 1895px; flex: none; overflow: hidden; color: #111; }
.shot { width: 1098px; height: 669px; margin-left: 402px; background: #fff2bf; overflow: hidden; }
.mini { transform: scale(.73); transform-origin: 0 0; width: 1504px; height: 916px; filter: blur(.5px); display: flex; flex-direction: column; }
.mini-lists { display: flex; gap: 33px; padding-left: 16px; height: 527px; flex: none; }
.mini-students { flex: 0 0 779px; }
.mini-lessons { flex: 0 0 655px; }
.card.focus { border: 4px solid #3f7fe8; margin-top: -3px; padding: 5px 0 7px 22px; }
.mini-result { margin: 36px 0 0 16px; width: 1468px; height: 215px; border: 4px solid #3f7fe8; flex: none; }
.mini-result .result-head { height: 52px; }
.mini-result .result-body { margin-top: 25px; }
.mini-result, .mini-command { color: #5f3a14; }
.mini-command { margin: 23px 0 0 12px; width: 1472px; gap: 28px; }
.focus-input { height: 63px; border: 4px solid #3f7fe8; font-size: 26.5px; padding-left: 24px; }
.mini-command .send { width: 140px; }
.mini-status { margin-top: 8px; padding-left: 6px; }
.mini-status .status-a { width: 197px; }

.caption { height: 33px; margin: 33px 0 0; display: flex; justify-content: center; align-items: center; gap: 9px; font: 400 22.500px "Open Sans", sans-serif; }
.code { font: 400 22px "DejaVu Sans Mono", monospace; background: #f0f0fa; border: 1px solid #e4e4f2; border-radius: 4px; height: 33px; display: inline-flex; align-items: center; padding: 0 13px; }
.next { display: flex; margin: 122px 0 0 445px; height: 40px; font-size: 24px; align-items: flex-start; }
.warn { color: #e2552c; white-space: nowrap; line-height: 30px; width: 374px; padding-top: 2px; }
.next-code { height: 40px; width: 109px; }

.page-sb { width: 25px; flex: none; background: #f0f0f0; position: relative; display: flex; flex-direction: column; align-items: center; }
.sb-up { width: 0; height: 0; margin-top: 9px; border: 6px solid transparent; border-top: 0; border-bottom: 7px solid #505050; }
.page-thumb { width: 21px; height: 25px; background: #c1c1c1; margin-top: 481px; }
.sb-down { width: 0; height: 0; margin-top: auto; margin-bottom: 8px; border: 6px solid transparent; border-bottom: 0; border-top: 7px solid #505050; }
.mark { position: absolute; left: 0; width: 25px; height: 3px; background: #c97a00; border-top: 1px solid #b34c00; }
.m1 { top: 465px; }
.m2 { top: 793px; }
.m3 { top: 799px; }

/* Taskbars */
.taskbars { display: flex; height: 60px; }
.taskbar { display: flex; height: 60px; align-items: center; flex: none; }
.left-bar { width: 1913px; background: linear-gradient(90deg, #ececec 0%, #e8e8e8 50%, #d2d2d2 85%); border-right: 2px solid #aaa; }
.right-bar { width: 1927px; padding-left: 7px; background: linear-gradient(90deg, #d4d4d4 12%, #d8dfc8 25%, #d8dfc8 39%, #d4d4d4 42%); }
.tb-start { width: 73px; display: flex; justify-content: center; flex: none; }
.tb-win { width: 24px; height: 24px; }
.search-box { width: 514px; height: 60px; background: #fff; border: solid #ccc; border-width: 2px 3px; display: flex; align-items: center; padding-left: 14px; gap: 14px; font: 400 22px "Open Sans", sans-serif; color: #111; flex: none; }
.search-ic { width: 26px; height: 24px; }
.slot { width: 75px; height: 60px; display: flex; align-items: center; justify-content: center; position: relative; flex: none; padding-bottom: 4px; }
.rslot { width: 72px; height: 60px; display: flex; align-items: center; justify-content: center; flex: none; padding-bottom: 4px; }
.first-app { margin-left: 3px; }
.tb-sm { width: 24px; height: 23px; }
.tb-ic { width: 35px; height: 34px; }
.run::after { content: ""; position: absolute; left: 7px; right: 7px; bottom: 0; height: 3px; background: #9acd32; }
.multi::after { background: linear-gradient(90deg, #9acd32 80%, #c0e080 80%); }
.on { background: #f3f3f0; }
.on::after { left: 0; right: 0; }
.tray { margin-left: auto; display: flex; align-items: center; gap: 19px; padding-right: 31px; color: #111; font: 400 20px "Open Sans", sans-serif; }
.tray-weather { width: 30px; height: 24px; }
.tray-caret { width: 19px; height: 12px; }
.tray-cam { width: 16px; height: 22px; }
.tray-wifi { width: 20px; height: 18px; }
.tray-notif { width: 25px; height: 24px; }
.clock { display: flex; flex-direction: column; align-items: center; font: 400 18px "Liberation Sans", sans-serif; line-height: 28px; color: #222; }
.right-clock { margin-left: auto; margin-right: 7px; }
```
